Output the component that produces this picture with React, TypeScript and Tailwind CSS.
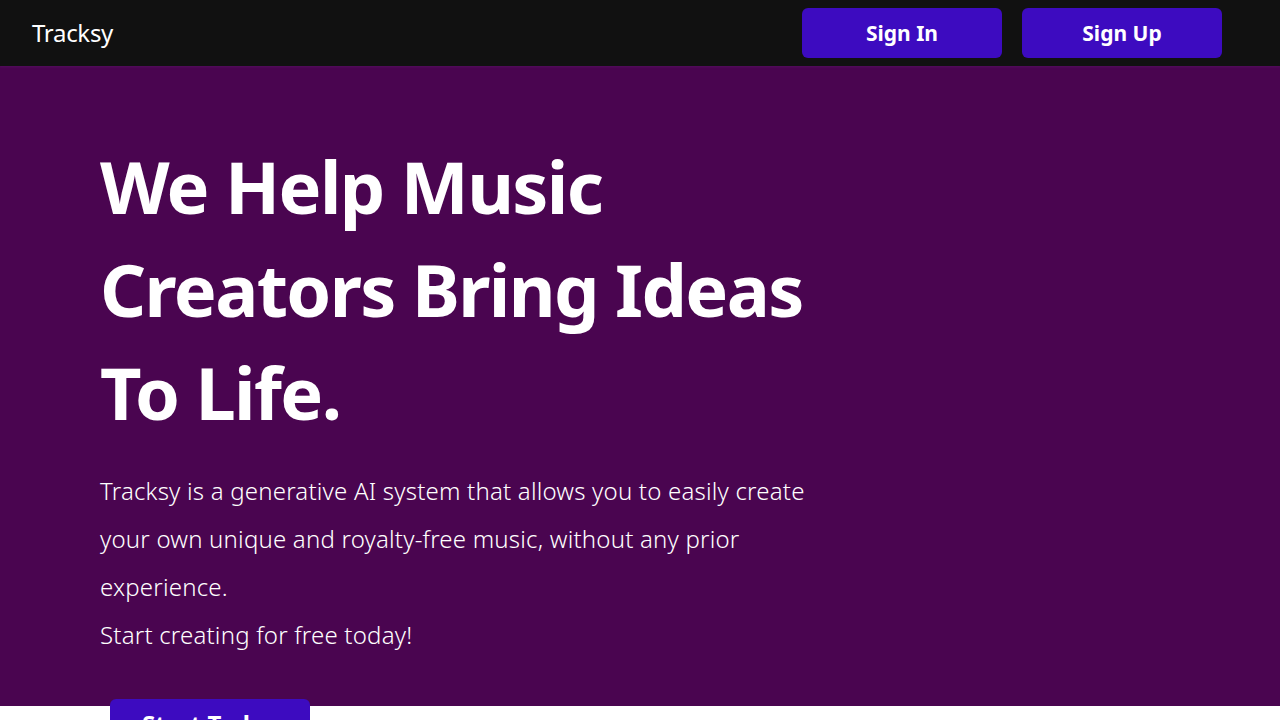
import React from "react";

export default function App() {
  return (
    <div className="w-full min-h-screen bg-white font-['Noto_Sans',sans-serif]">
      <header className="h-[66px] bg-[#111111] flex items-center justify-between pl-8 pr-[58px] relative z-10 shadow-[0_1px_2px_rgba(90,20,100,0.6)]">
        <div className="text-white text-[24px] font-normal tracking-[-0.3px]">Tracksy</div>
        <div className="flex gap-5">
          <button className="w-[200px] h-[50px] rounded-md bg-[#3d0bc0] text-white text-[21px] font-bold pt-[2px]">Sign In</button>
          <button className="w-[200px] h-[50px] rounded-md bg-[#3d0bc0] text-white text-[21px] font-bold pt-[2px]">Sign Up</button>
        </div>
      </header>
      <section className="bg-[#4a0550] h-[640px] pl-[100px] pt-[69px]">
        <h1 className="text-white text-[72px] font-bold leading-[103px] tracking-[-1.6px]">
          We Help Music
          <br />
          Creators Bring Ideas
          <br />
          To Life.
        </h1>
        <p className="mt-[23px] text-white text-[24px] font-light leading-[48px] tracking-[0.2px]">
          Tracksy is a generative AI system that allows you to easily create
          <br />
          your own unique and royalty-free music, without any prior
          <br />
          experience.
        </p>
        <p className="text-white text-[24px] font-light leading-[48px] tracking-[0.2px]">Start creating for free today!</p>
      </section>
      <div className="pl-[110px] -mt-[7px] relative">
        <button className="w-[200px] h-[50px] rounded-md bg-[#3d0bc0] text-white text-[24px] font-bold">Start Today</button>
      </div>
    </div>
  );
}
